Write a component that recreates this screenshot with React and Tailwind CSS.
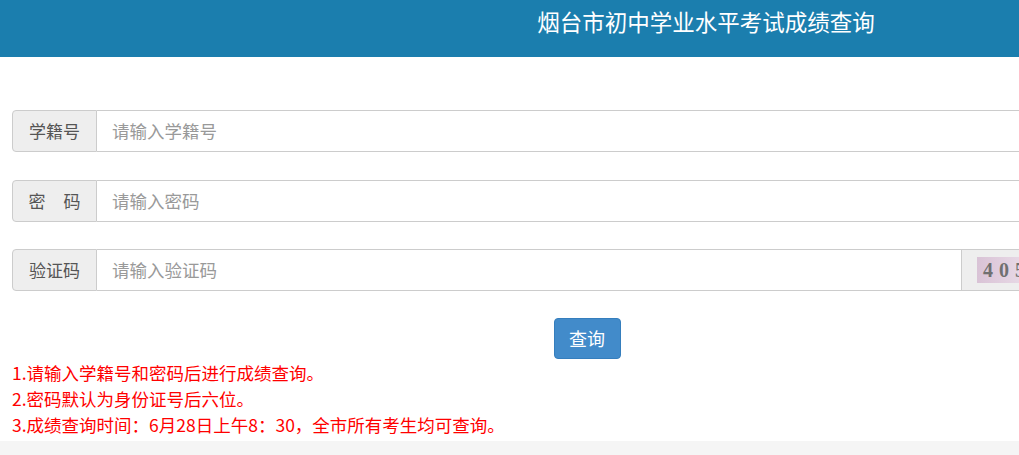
import React from 'react';

const FONT = { fontFamily: '"Microsoft YaHei", "Noto Sans CJK SC", "Noto Sans", sans-serif' };

const Field = ({ label, placeholder, captcha }) => (
  <div className="flex h-[42px] w-full">
    <span className="flex w-[85px] shrink-0 items-center justify-center rounded-l-[4px] border border-[#ccc] bg-[#eee] text-[17px] text-[#555]">
      {label}
    </span>
    <input
      type="text"
      placeholder={placeholder}
      className="min-w-0 flex-1 border border-l-0 border-[#ccc] bg-white px-[15px] text-[17.5px] text-[#555] outline-none placeholder:text-[#999]"
    />
    {captcha && (
      <span className="flex w-[200px] shrink-0 items-center rounded-r-[4px] border border-l-0 border-[#ccc] bg-[#eee] px-[15px]">
        <span
          className="flex h-[26px] w-[100px] items-center gap-[6px] bg-gradient-to-r from-[#d9c3d6] via-[#e9dbe7] to-[#cdb7cc] pl-[6px] text-[20px] font-bold text-[#707070]"
          style={{ fontFamily: '"Liberation Serif", serif' }}
        >
          <span>4</span>
          <span>0</span>
          <span>5</span>
          <span>8</span>
        </span>
      </span>
    )}
  </div>
);

export default function App() {
  return (
    <div className="h-[455px] w-full overflow-hidden bg-white" style={FONT}>
      <div className="w-[1412px]">
        <header className="h-[57px] bg-[#1b7eae] pt-[5px] text-center">
          <h1 className="text-[22.5px] leading-[32px] text-white">烟台市初中学业水平考试成绩查询</h1>
        </header>

        <form className="flex w-[1162px] flex-col pl-[12px] pt-[53px]">
          <Field label="学籍号" placeholder="请输入学籍号" />
          <div className="mt-[28px]">
            <Field label={<span className="flex gap-[18px]"><span>密</span><span>码</span></span>} placeholder="请输入密码" />
          </div>
          <div className="mt-[27px]">
            <Field label="验证码" placeholder="请输入验证码" captcha />
          </div>
          <div className="mt-[27px] flex justify-center">
            <button
              type="button"
              className="h-[41px] w-[67px] rounded-[4px] border border-[#357ebd] bg-[#428bca] text-[18px] text-white"
            >
              查询
            </button>
          </div>
        </form>

        <div className="pl-[12px] pt-[1px] text-[17.5px] leading-[26px] text-[#ff0000]">
          <p>1.请输入学籍号和密码后进行成绩查询。</p>
          <p>2.密码默认为身份证号后六位。</p>
          <p>3.成绩查询时间：6月28日上午8：30，全市所有考生均可查询。</p>
        </div>

        <footer className="mt-[3px] h-[40px] bg-[#f5f5f5]" />
      </div>
    </div>
  );
}
